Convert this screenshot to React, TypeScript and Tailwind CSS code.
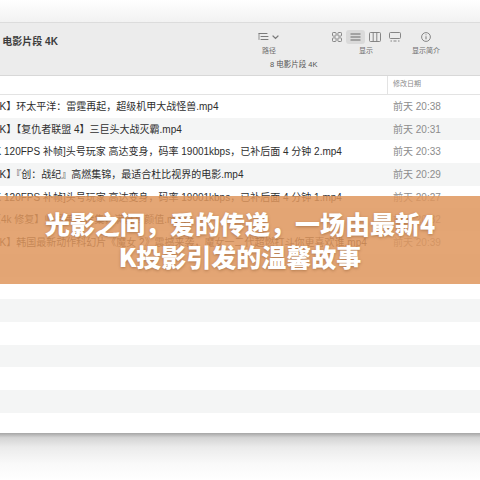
const files = [
  { name: "【4K】环太平洋：雷霆再起，超级机甲大战怪兽.mp4", time: "前天 20:38", shift: "-ml-[16px]" },
  { name: "【4K】【复仇者联盟 4】三巨头大战灭霸.mp4", time: "前天 20:31", shift: "-ml-[16px]" },
  { name: "【4K 120FPS 补帧]头号玩家 高达变身，码率 19001kbps，已补后面 4 分钟 2.mp4", time: "前天 20:33", shift: "-ml-[21px]" },
  { name: "【4K】『创：战纪』高燃集锦，最适合杜比视界的电影.mp4", time: "前天 20:29", shift: "-ml-[16px]" },
  { name: "【4K 120FPS 补帧]头号玩家 高达变身，码率 19001kbps，已补后面 4 分钟 1.mp4", time: "前天 20:27", shift: "-ml-[21px]" },
  { name: "【4k 修复】帅哥美女合集，满屏高颜值.mp4", time: "前天 20:32", shift: "-ml-[9px]" },
  { name: "【4K】韩国最新动作科幻片《魔女 2》震撼来袭，魔女一二代超燃打斗你更喜欢谁.mp4", time: "前天 20:39", shift: "-ml-[16px]" },
  { name: "", time: "", shift: "" },
  { name: "", time: "", shift: "" },
  { name: "", time: "", shift: "" },
  { name: "", time: "", shift: "" },
  { name: "", time: "", shift: "" },
  { name: "", time: "", shift: "" },
  { name: "", time: "", shift: "" },
  { name: "", time: "", shift: "" },
];

function PathIcon() {
  return (
    <svg width="22" height="10" viewBox="0 0 22 10" fill="none" stroke="#7a7a7a" strokeWidth="1" strokeLinecap="round">
      <path d="M1 1.5h8M3 4.5h7M3 7.5h7" />
      <path d="M1 1.5v6" strokeWidth="0.8" />
      <path d="M15 4l2.5 2.5L20 4" strokeWidth="1.2" />
    </svg>
  );
}

function GridIcon() {
  return (
    <svg width="10" height="10" viewBox="0 0 10 10" fill="none" stroke="#7a7a7a" strokeWidth="0.9">
      <rect x="0.5" y="0.5" width="3.6" height="3.6" rx="0.8" />
      <rect x="5.9" y="0.5" width="3.6" height="3.6" rx="0.8" />
      <rect x="0.5" y="5.9" width="3.6" height="3.6" rx="0.8" />
      <rect x="5.9" y="5.9" width="3.6" height="3.6" rx="0.8" />
    </svg>
  );
}

function ListIcon() {
  return (
    <svg width="11" height="10" viewBox="0 0 11 10" fill="none" stroke="#6a6a6a" strokeWidth="1">
      <path d="M0.5 2h10M0.5 5h10M0.5 8h10" />
    </svg>
  );
}

function ColumnsIcon() {
  return (
    <svg width="12" height="10" viewBox="0 0 12 10" fill="none" stroke="#7a7a7a" strokeWidth="0.9">
      <rect x="0.5" y="0.5" width="11" height="9" rx="1" />
      <path d="M4.2 0.5v9M7.8 0.5v9" />
    </svg>
  );
}

function GalleryIcon() {
  return (
    <svg width="12" height="10" viewBox="0 0 12 10" fill="none" stroke="#7a7a7a" strokeWidth="0.9">
      <rect x="0.5" y="0.5" width="11" height="6" rx="1" />
      <path d="M1.5 9h1.5M4.5 9h3M9 9h1.5" />
    </svg>
  );
}

function InfoIcon() {
  return (
    <svg width="10" height="10" viewBox="0 0 10 10" fill="none" stroke="#7a7a7a" strokeWidth="0.9">
      <circle cx="5" cy="5" r="4.4" />
      <path d="M5 4.3v3" strokeWidth="1" />
      <circle cx="5" cy="2.8" r="0.5" fill="#7a7a7a" stroke="none" />
    </svg>
  );
}

function Toolbar() {
  return (
    <div className="flex h-[53px] shrink-0 border-b border-[#d8d8d8] bg-[#ececec]">
      <div className="w-[256px] shrink-0 pt-[12px]">
        <div className="-ml-[6px] whitespace-nowrap text-[10px] font-bold leading-[14px] text-[#3d3d3d]">8 电影片段 4K</div>
      </div>
      <div className="flex flex-col">
        <div className="flex pt-[7px]">
          <div className="flex w-[26px] flex-col items-center">
            <div className="flex h-[14px] items-center"><PathIcon /></div>
            <div className="mt-[2px] text-[7px] leading-[9px] text-[#6e6e6e]">路径</div>
          </div>
          <div className="ml-[46px] flex w-[76px] flex-col items-center">
            <div className="flex h-[14px] items-center">
              <div className="flex w-[19px] justify-center"><GridIcon /></div>
              <div className="flex h-[14px] w-[19px] items-center justify-center rounded-[3px] bg-[#dadada]"><ListIcon /></div>
              <div className="flex w-[20px] justify-center"><ColumnsIcon /></div>
              <div className="flex w-[20px] justify-center"><GalleryIcon /></div>
            </div>
            <div className="mt-[2px] text-[7px] leading-[9px] text-[#6e6e6e]">显示</div>
          </div>
          <div className="ml-[4px] flex w-[36px] flex-col items-center">
            <div className="flex h-[14px] items-center"><InfoIcon /></div>
            <div className="mt-[2px] whitespace-nowrap text-[7px] leading-[9px] text-[#6e6e6e]">显示简介</div>
          </div>
        </div>
        <div className="ml-[14px] mt-[5px] whitespace-nowrap text-[7.5px] leading-[10px] text-[#555]">8 电影片段 4K</div>
      </div>
    </div>
  );
}

export default function App() {
  return (
    <div className="relative h-[480px] w-[480px] overflow-hidden bg-white font-['Liberation_Sans','Noto_Sans_CJK_SC',sans-serif]">
      <div className="flex h-[433px] flex-col overflow-hidden bg-white">
        <div className="h-[23px] shrink-0 border-b border-[#dcdcdc] bg-gradient-to-b from-white to-[#f2f2f2]" />
        <Toolbar />
        <div className="flex h-[19px] shrink-0 border-b border-[#e3e3e3] bg-white">
          <div className="w-[388px] shrink-0 border-r border-[#e3e3e3]" />
          <div className="pl-[5px] pt-[3px] text-[7px] leading-[9px] text-[#8a8a8a]">修改日期</div>
        </div>
        {files.map((f, i) => (
          <div
            key={i}
            className={`flex h-[22.7px] shrink-0 items-center ${i % 2 === 1 ? "bg-[#f4f5f5]" : "bg-white"}`}
          >
            <div className="w-[393px] shrink-0 overflow-hidden">
              <div className={`${f.shift} whitespace-nowrap text-[10px] text-[#2e2e2e]`}>{f.name}</div>
            </div>
            <div className="whitespace-nowrap text-[10px] text-[#8c8c8c]">{f.time}</div>
          </div>
        ))}
      </div>
      <div className="h-[47px] bg-[linear-gradient(to_bottom,#a6a6a6,#d4d4d4_10%,#ebebeb_30%,#f9f9f9_65%,#ffffff)]" />

      <div className="absolute left-0 top-[196px] flex h-[88px] w-full items-center justify-center bg-[rgba(223,150,93,0.85)]">
        <div className="w-[400px] break-all text-center font-['Noto_Sans_CJK_SC',sans-serif] text-[25px] font-black leading-[33px] text-white [text-shadow:0_1px_3px_rgba(80,40,10,0.35)]">
          光影之间，爱的传递，一场由最新4K投影引发的温馨故事
        </div>
      </div>
    </div>
  );
}
